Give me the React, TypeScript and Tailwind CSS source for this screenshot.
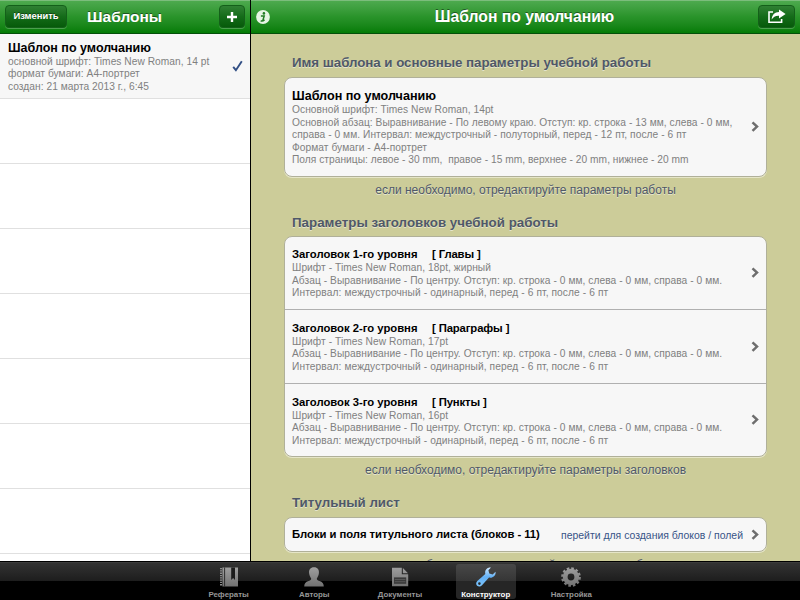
import React from 'react';

// Small grey chevron on the right side of table cells
const Chevron = () => (
  <svg width="8" height="12" viewBox="0 0 8 12" fill="none" className="shrink-0">
    <path d="M1.5 1.4L6 5.6L1.5 9.8" stroke="#6e6e6e" strokeWidth="2.5" />
  </svg>
);

const NavBar = ({ children }: { children: React.ReactNode }) => (
  <header className="flex h-[34px] shrink-0 items-center border-b border-[#04500a] bg-linear-to-b from-[#4fab50] via-[#2a942b] to-[#037c05] shadow-[inset_0_1px_0_#7cbd7c]">
    {children}
  </header>
);

const barButton =
  'flex h-[23px] items-center justify-center rounded-[4px] border border-[#14601a] bg-linear-to-b from-[#2f8033] via-[#146c19] to-[#065a0a] text-white shadow-[0_1px_0_#4aa04c]';

const titleShadow = '[text-shadow:0_-1px_0_rgba(0,0,0,0.45)]';

const SectionTitle = ({ className, children }: { className: string; children: React.ReactNode }) => (
  <h2
    className={`pl-[41px] text-[13.3px] leading-[16px] font-bold text-[#4f5868] [text-shadow:0_1px_0_rgba(255,255,255,0.5)] ${className}`}
  >
    <span>{children}</span>
  </h2>
);

const SectionNote = ({ className, children }: { className: string; children: React.ReactNode }) => (
  <p
    className={`text-center text-[12px] leading-[14px] text-[#4f5868] [text-shadow:0_1px_0_rgba(255,255,255,0.5)] ${className}`}
  >
    <span>{children}</span>
  </p>
);

const Card = ({ className, children }: { className: string; children: React.ReactNode }) => (
  <div
    className={`mr-[33px] ml-[33px] shrink-0 overflow-hidden rounded-[8px] border border-[#b0b099] bg-[#f7f7f7] shadow-[0_1px_0_#e6e6c8] ${className}`}
  >
    {children}
  </div>
);

const headings = [
  { level: 1, kind: 'Главы', font: '18pt, жирный' },
  { level: 2, kind: 'Параграфы', font: '17pt' },
  { level: 3, kind: 'Пункты', font: '16pt' },
];

const Sidebar = () => (
  <aside className="flex w-[250px] shrink-0 flex-col overflow-hidden bg-white">
    <NavBar>
      <button className={`ml-[5px] w-[62px] text-[9.4px] font-bold ${barButton} ${titleShadow}`}>
        <span>Изменить</span>
      </button>
      <h1 className={`ml-[20px] w-[76px] pt-px text-[15.5px] font-bold whitespace-nowrap text-white ${titleShadow}`}>
        <span>Шаблоны</span>
      </h1>
      <button className={`ml-auto mr-[5px] w-[26px] ${barButton}`}>
        <svg width="12" height="12" viewBox="0 0 12 12">
          <path d="M6 1V11M1 6H11" stroke="#fff" strokeWidth="2.4" />
        </svg>
      </button>
    </NavBar>

    <div className="flex h-[65px] shrink-0 items-center border-b border-[#e0e0e0] bg-[#f7f7f7] pr-[7px] pl-[8px]">
      <div className="flex-1 pt-[2px] whitespace-nowrap">
        <div className="text-[12.5px] leading-[15px] font-bold text-black">
          <span>Шаблон по умолчанию</span>
        </div>
        <div className="text-[10.2px] leading-[12.5px] tracking-[0.04px] text-[#808080]">
          <div><span>основной шрифт: Times New Roman, 14 pt</span></div>
          <div><span>формат бумаги: A4-портрет</span></div>
          <div><span>создан: 21 марта 2013 г., 6:45</span></div>
        </div>
      </div>
      <svg width="11" height="12" viewBox="0 0 11 12" fill="none">
        <path d="M1.2 6.8L3.9 10.2L9.8 1.2" stroke="#324f85" strokeWidth="1.9" />
      </svg>
    </div>
    {[...Array(8)].map((_, i) => (
      <div key={i} className="h-[65px] shrink-0 border-b border-[#e0e0e0]"></div>
    ))}
  </aside>
);

const Detail = () => (
  <main className="flex min-w-0 flex-1 flex-col overflow-hidden border-l border-black bg-[#cccc99]">
    <NavBar>
      <svg width="14" height="14" viewBox="0 0 14 14" className="ml-[5px]">
        <circle cx="7" cy="7" r="6.9" fill="#e6f5e4" />
        <circle cx="7.9" cy="3.4" r="1.3" fill="#237c25" />
        <path d="M4.9 6H8.2L6.9 10.2H8.6M4.7 10.8C6 11.4 7.2 11 8.6 10" stroke="#237c25" strokeWidth="1.5" fill="none" />
      </svg>
      <h1 className={`flex-1 pt-px pl-[21px] text-center text-[15.7px] font-bold whitespace-nowrap text-white ${titleShadow}`}>
        <span>Шаблон по умолчанию</span>
      </h1>
      <button className={`mr-[5px] w-[37px] ${barButton}`}>
        <svg width="19" height="15" viewBox="0 0 19 15">
          <path d="M6 3H2V13.2H14.6V10" stroke="#fff" strokeWidth="1.6" fill="none" />
          <path d="M12 0.5L18.6 5L12 9.4V6.8C8.5 6.6 6.3 7.8 4.7 10.6C4.9 5.8 7.6 3.2 12 3Z" fill="#fff" />
        </svg>
      </button>
    </NavBar>

    <div className="flex min-h-0 flex-1 flex-col overflow-hidden whitespace-nowrap">
      <SectionTitle className="mt-[21px] tracking-[-0.03px]">Имя шаблона и основные параметры учебной работы</SectionTitle>

      <Card className="mt-[6px] h-[100px]">
        <div className="flex h-full items-center pr-[7px] pl-[7px]">
          <div className="flex-1 pt-[2px]">
            <div className="text-[12.6px] leading-[15px] font-bold text-black">
              <span>Шаблон по умолчанию</span>
            </div>
            <div className="text-[10.2px] leading-[12.5px] tracking-[0.06px] text-[#808080]">
              <div><span>Основной шрифт: Times New Roman, 14pt</span></div>
              <div><span>Основной абзац: Выравнивание - По левому краю. Отступ: кр. строка - 13 мм, слева - 0 мм,</span></div>
              <div><span>справа - 0 мм. Интервал: междустрочный - полуторный, перед - 12 пт, после - 6 пт</span></div>
              <div><span>Формат бумаги - A4-портрет</span></div>
              <div><span className="tracking-[0.03px] whitespace-pre">Поля страницы: левое - 30 mm,  правое - 15 mm, верхнее - 20 mm, нижнее - 20 mm</span></div>
            </div>
          </div>
          <Chevron />
        </div>
      </Card>
      <SectionNote className="mt-[6px]">если необходимо, отредактируйте параметры работы</SectionNote>

      <SectionTitle className="mt-[18px] tracking-[0.03px]">Параметры заголовков учебной работы</SectionTitle>
      <Card className="mt-[5px] h-[221px]">
        {headings.map((h) => (
          <div
            key={h.level}
            className="flex h-[73.4px] items-center border-b border-[#b0b0b0] pr-[7px] pl-[7px] last:border-b-0"
          >
            <div className="flex-1 pt-px">
              <div className="flex text-[11.3px] leading-[15px] font-bold text-black">
                <span className="w-[140px] tracking-[-0.02px]">Заголовок {h.level}-го уровня</span>
                <span className="tracking-[-0.12px]">[ {h.kind} ]</span>
              </div>
              <div className="text-[10.2px] leading-[12.5px] tracking-[0.06px] text-[#808080]">
                <div><span>Шрифт - Times New Roman, {h.font}</span></div>
                <div><span>Абзац - Выравнивание - По центру. Отступ: кр. строка - 0 мм, слева - 0 мм, справа - 0 мм.</span></div>
                <div><span className="tracking-[0.1px]">Интервал: междустрочный - одинарный, перед - 6 пт, после - 6 пт</span></div>
              </div>
            </div>
            <Chevron />
          </div>
        ))}
      </Card>
      <SectionNote className="mt-[6px]">если необходимо, отредактируйте параметры заголовков</SectionNote>

      <SectionTitle className="mt-[18px] tracking-[-0.03px]">Титульный лист</SectionTitle>
      <Card className="mt-[6px] h-[35px]">
        <div className="flex h-full items-center pr-[7px] pl-[7px]">
          <span className="text-[11.3px] font-bold tracking-[-0.05px] text-black">Блоки и поля титульного листа (блоков - 11)</span>
          <span className="mr-[8px] ml-auto pt-[2px] text-[10.45px] text-[#385487]">перейти для создания блоков / полей</span>
          <Chevron />
        </div>
      </Card>
      <SectionNote className="mt-[6px]">если необходимо, отредактируйте параметры блоков</SectionNote>
    </div>
  </main>
);

const tabs = [
  {
    label: 'Рефераты',
    icon: (
      <>
        <path d="M2 1V19" stroke="#8c8c8c" strokeWidth="2" strokeDasharray="1.3 1" />
        <path d="M3.4 0.5H19V19.5H3.4Z" fill="url(#grey)" />
        <path d="M5.6 0.5V19.5" stroke="#222" strokeWidth="0.9" />
        <path d="M12.2 0.5H16V13L14.1 11L12.2 13Z" fill="#1b1b1b" />
      </>
    ),
  },
  {
    label: 'Авторы',
    icon: (
      <path
        d="M10 0.3C13.6 0.3 15.3 2.9 14.9 6.2C14.6 8.6 13.5 10.4 12.9 11.3C12.6 12.7 13.2 13.3 15.4 14C18.4 15 19.7 16.2 19.8 19.6H0.2C0.3 16.2 1.600 15 4.600 14C6.800 13.300 7.400 12.700 7.100 11.300C6.500 10.400 5.400 8.600 5.100 6.200C4.700 2.900 6.400 0.300 10 0.300Z"
        fill="url(#grey)"
      />
    ),
  },
  {
    label: 'Документы',
    icon: (
      <>
        <path d="M2 0.8H11.8V7.2H18.200V19.200H2Z" fill="url(#grey)" />
        <path d="M12.900 1L18 6.200H12.900Z" fill="url(#grey)" />
        <path d="M4 10.400H16.200V16.800H4Z" fill="#3a3a3a" />
        <path d="M4.800 12.500H15.400M4.800 14.700H15.400" stroke="#666" strokeWidth="0.7" />
      </>
    ),
  },
  {
    label: 'Конструктор',
    active: true,
    icon: (
      <path
        fillRule="evenodd"
        d="M15 0.500C11.500 -0.200 8.400 2.900 9.300 6.900L1.300 14C-0.200 15.300 -0.200 17.600 1.100 18.800C2.400 20 4.700 19.800 6 18.300L13 10.600C17 11.500 20.200 8.200 19.500 4.800L16.700 7.400L13.300 6.600L12.400 3.200ZM3.400 15.300A1.300 1.300 0 1 0 3.400 17.900A1.300 1.300 0 1 0 3.400 15.300Z"
        fill="url(#blue)"
      />
    ),
  },
  {
    label: 'Настройка',
    icon: (
      <>
        <circle cx="10" cy="10" r="5.8" fill="none" stroke="url(#grey)" strokeWidth="4.8" />
        <circle cx="10" cy="10" r="8.7" fill="none" stroke="url(#grey)" strokeWidth="2.3" strokeDasharray="2.6 1.955" />
      </>
    ),
  },
];

const TabBar = () => (
  <nav className="flex h-[39px] shrink-0 justify-center gap-[25.7px] border-t border-black bg-[linear-gradient(#343434,#1d1d1d_50%,#000_50%)] pt-[2px] shadow-[inset_0_1px_0_#3c3c3c]">
    <svg width="0" height="0" className="absolute">
      <linearGradient id="grey" x1="0" y1="0" x2="0" y2="20" gradientUnits="userSpaceOnUse">
        <stop offset="0" stopColor="#a0a0a0" />
        <stop offset="1" stopColor="#707070" />
      </linearGradient>
      <linearGradient id="blue" x1="0" y1="0" x2="0" y2="20" gradientUnits="userSpaceOnUse">
        <stop offset="0" stopColor="#d3ebff" />
        <stop offset="0.5" stopColor="#62b0f5" />
        <stop offset="1" stopColor="#7cc3f8" />
      </linearGradient>
    </svg>
    {tabs.map((tab) => (
      <div
        key={tab.label}
        className={`flex h-[35px] w-[60px] flex-col items-center rounded-[3px] pt-[2.5px] ${
          tab.active ? 'bg-[linear-gradient(#484848,#363636_48%,#262626_50%)] text-white' : 'text-[#969696]'
        }`}
      >
        <svg width="20" height="20" viewBox="0 0 20 20" className="shrink-0">
          {tab.icon}
        </svg>
        <span className="mt-[3.5px] text-[7.9px] leading-[10px] font-bold whitespace-nowrap">{tab.label}</span>
      </div>
    ))}
  </nav>
);

const App: React.FC = () => {
  return (
    <div className="flex h-[600px] w-[800px] flex-col overflow-hidden bg-black font-['Liberation_Sans',Arial,sans-serif]">
      <div className="flex min-h-0 flex-1">
        <Sidebar />
        <Detail />
      </div>
      <TabBar />
    </div>
  );
};

export default App;
